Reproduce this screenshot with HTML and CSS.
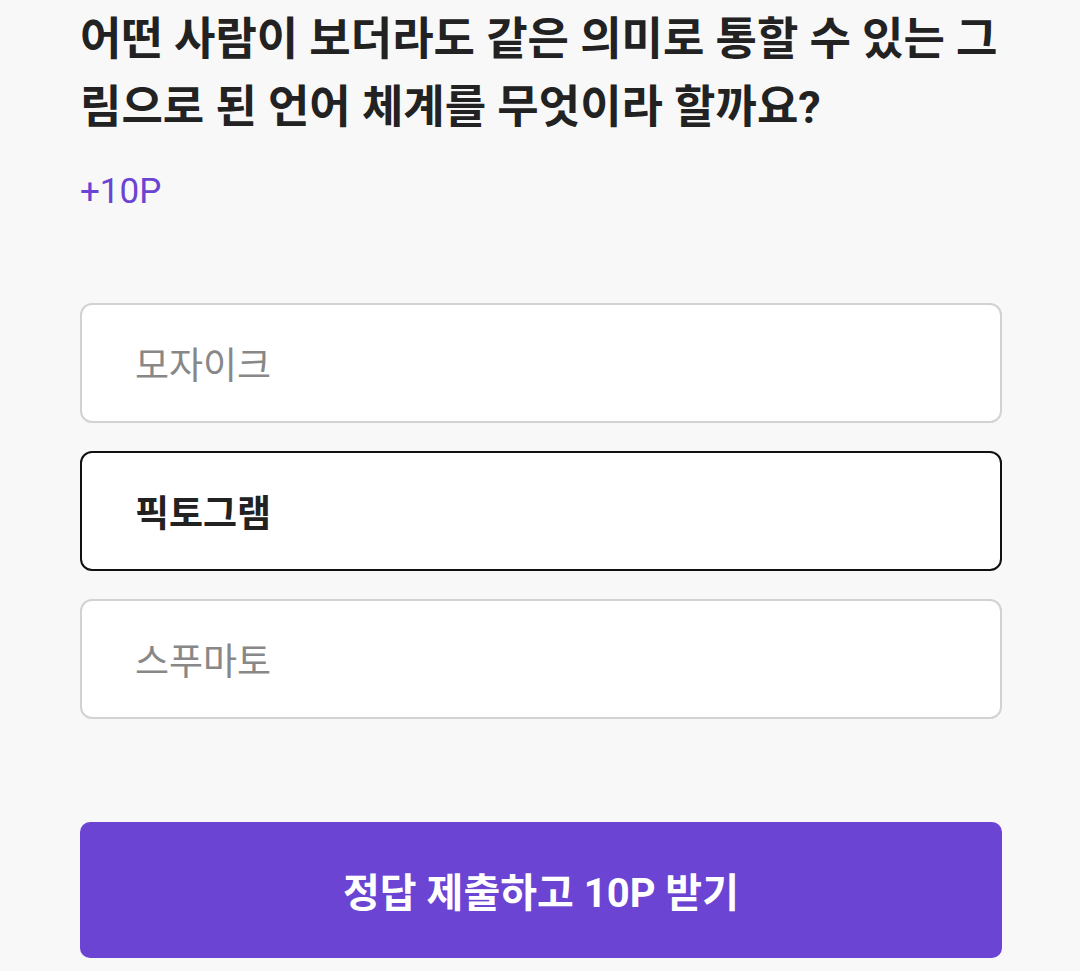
FILE: index.html
```html
<!DOCTYPE html>
<html lang="ko">
<head>
    <meta charset="UTF-8">
    <meta name="viewport" content="width=device-width, initial-scale=1.0">
    <title>퀴즈</title>
    <link rel="stylesheet" href="styles.css">
</head>
<body>
    <div class="quiz">
        <h1 class="question">어떤 사람이 보더라도 같은 의미로 통할 수 있는 그림으로 된 언어 체계를 무엇이라 할까요?</h1>
        <p class="reward">+10P</p>
        <ul class="options">
            <li class="option">모자이크</li>
            <li class="option selected">픽토그램</li>
            <li class="option">스푸마토</li>
        </ul>
        <button type="button" class="submit">정답 제출하고 10P 받기</button>
    </div>
</body>
</html>
```

FILE: styles.css
```css
body {
    margin: 0;
    background-color: #f8f8f8;
    font-family: Roboto, "Noto Sans CJK KR", sans-serif;
}

.quiz {
    width: 922px;
    margin-left: 80px;
    padding-top: 6px;
}

.question {
    margin: 0;
    font-size: 45px;
    line-height: 68px;
    font-weight: 700;
    color: #222;
}

.reward {
    margin: 30px 0 0;
    font-size: 35px;
    line-height: 40px;
    color: #6b44d3;
}

.options {
    list-style: none;
    margin: 91px 0 0;
    padding: 0;
    display: flex;
    flex-direction: column;
    gap: 28px;
}

.option {
    box-sizing: border-box;
    height: 120px;
    display: flex;
    align-items: center;
    padding-left: 53px;
    background-color: #fff;
    border: 2px solid #d2d2d2;
    border-radius: 12px;
    font-size: 37px;
    color: #888;
}

.option.selected {
    border-color: #111;
    color: #222;
    font-weight: 700;
}

.submit {
    display: block;
    width: 100%;
    height: 136px;
    margin-top: 103px;
    border: none;
    border-radius: 10px;
    background-color: #6b44d3;
    color: #fff;
    font-family: inherit;
    font-size: 40px;
    font-weight: 700;
    cursor: pointer;
}
```
